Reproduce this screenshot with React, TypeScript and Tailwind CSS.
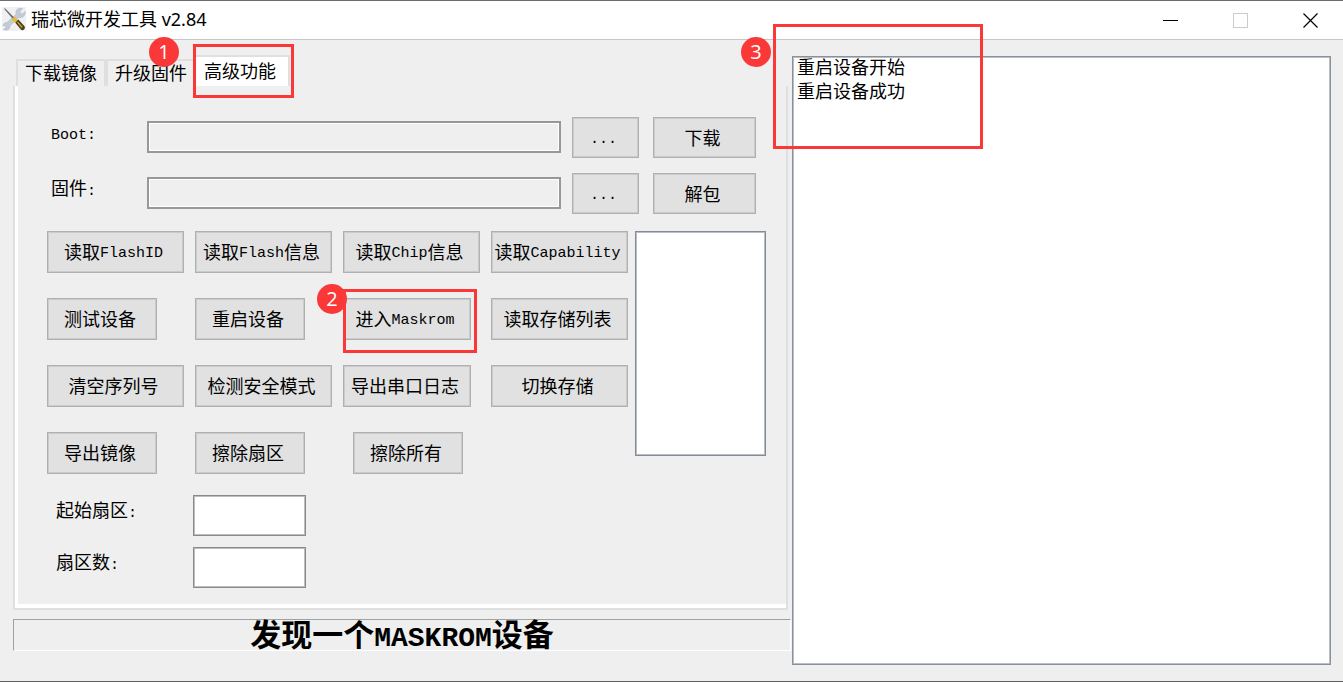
import { Fragment, type ReactNode } from "react";
import clsx from "clsx";

const TABS = ["下载镜像", "升级固件", "高级功能"];

const LOGS = ["重启设备开始", "重启设备成功"];

type Action = { label: string; width: string; mark?: boolean };

const ACTIONS: Action[] = [
  { label: "读取FlashID", width: "w-[137px]" },
  { label: "读取Flash信息", width: "w-[137px]" },
  { label: "读取Chip信息", width: "w-[137px]" },
  { label: "读取Capability", width: "w-[137px]" },
  { label: "测试设备", width: "w-[110px]" },
  { label: "重启设备", width: "w-[110px]" },
  { label: "进入Maskrom", width: "w-[128px]", mark: true },
  { label: "读取存储列表", width: "w-[137px]" },
  { label: "清空序列号", width: "w-[137px]" },
  { label: "检测安全模式", width: "w-[137px]" },
  { label: "导出串口日志", width: "w-[128px]" },
  { label: "切换存储", width: "w-[137px]" },
  { label: "导出镜像", width: "w-[110px]" },
  { label: "擦除扇区", width: "w-[110px]" },
  { label: "擦除所有", width: "w-[110px] ml-[10px]" },
];

// Latin runs are set smaller so that one letter is half a Chinese character wide
function Mixed({ text, latin = "text-[15px]" }: { text: string; latin?: string }) {
  return (
    <>
      {text.split(/([\x21-\x7e]+)/).map((part, i) =>
        i % 2 ? (
          <span key={i} className={latin}>
            {part}
          </span>
        ) : (
          <Fragment key={i}>{part}</Fragment>
        )
      )}
    </>
  );
}

function Button({ className, children }: { className?: string; children: ReactNode }) {
  return (
    <button
      type="button"
      className={clsx(
        "flex items-center justify-center whitespace-nowrap border border-[#b0b0b0] bg-[#e1e1e1] pt-1 pr-1 inset-ring-1 inset-ring-[#cbcbcb] hover:bg-[#e5f1fb]",
        className
      )}
    >
      {children}
    </button>
  );
}

// Red frame with a numbered badge, drawn over the interface
function Mark({ step, frame, badge }: { step: number; frame: string; badge: string }) {
  return (
    <>
      <span className={clsx("pointer-events-none absolute z-10 border-3 border-[#fb3838]", frame)} />
      <span
        className={clsx(
          "pointer-events-none absolute z-20 flex size-[30px] items-center justify-center rounded-full bg-[#fb3838] font-['Open_Sans',sans-serif] text-xl leading-none text-white",
          badge
        )}
      >
        {step}
      </span>
    </>
  );
}

function ToolIcon() {
  return (
    <svg viewBox="0 0 24 24" className="size-6" aria-hidden="true">
      <rect width="24" height="24" fill="#eef0f3" />
      <path
        d="M15 2.5c2-1.500 4-1.500 5.500-.8l-2.600 2.800.6 2 2 .5L23 4.500c.6 2.500-.6 5-3.200 5.800-1 .3-1.800.2-2.600 0L8 18.800c.2 2-.8 3.700-3 4.200-1.200.2-2.500 0-3.400-.6L4 20.500l-.5-1.700-1.800-.4L1 19c.2-2 1.700-3.500 4-3.400L14.200 7.200c-.5-1.700-.2-3.500.8-4.700z"
        fill="#c3ccd6"
        stroke="#a9b5c1"
        strokeWidth=".6"
      />
      <path d="M1.800 1.600l1.500-.1L12 10.600l-1.300 1.200z" fill="#6d6a5c" />
      <path d="M10 12.300l2.600-2.500 3.400 3.500-2.600 2.600z" fill="#f0b72c" />
      <path d="M13.300 15.800l3-3.200 6 6.400c1 1.300.6 2.600-.3 3.500-1 .9-2.300.9-3.300-.2z" fill="#4b3d1d" />
      <path d="M15.500 15l4.700 5.500" stroke="#e0a524" strokeWidth="1.200" />
    </svg>
  );
}

function TitleBar() {
  return (
    <header className="flex h-10 items-stretch border-t border-b border-t-[#6e6c6e] border-b-[#c6c6c6] bg-white">
      <div className="flex flex-1 items-center gap-[5px] pb-0.5 pl-0.5">
        <ToolIcon />
        <h1 className="font-['Noto_Sans','Noto_Sans_CJK_SC',sans-serif] text-lg leading-6">
          瑞芯微开发工具 v2.84
        </h1>
      </div>
      <div className="flex">
        <button type="button" aria-label="最小化" className="flex w-[70px] items-center justify-center pl-1">
          <svg width="15" height="15" shapeRendering="crispEdges">
            <path d="M0 7.500h15" stroke="#000" />
          </svg>
        </button>
        <button type="button" aria-label="最大化" disabled className="flex w-[70px] items-center justify-center pl-1">
          <svg width="15" height="15" shapeRendering="crispEdges">
            <path d="M.5.5h14v14H.5z" fill="none" stroke="#ccc" />
          </svg>
        </button>
        <button type="button" aria-label="关闭" className="flex w-[70px] items-center justify-center pl-1">
          <svg width="15" height="15">
            <path d="M.5.5l14 14M14.500.5l-14 14" stroke="#000" strokeWidth="1.200" />
          </svg>
        </button>
      </div>
    </header>
  );
}

function FileRow({ id, label, action }: { id: string; label: string; action: string }) {
  return (
    <div className="flex h-[41px] items-center">
      <label htmlFor={id} className="w-24 pb-1.5">
        <Mixed text={label} />
      </label>
      <input
        id={id}
        readOnly
        className="mb-0.5 h-8 w-[414px] border-2 border-[#989898] bg-[#efefef] px-1 inset-ring-1 inset-ring-white"
      />
      <Button className="ml-[11px] h-full w-[67px]">
        <Mixed text="..." />
      </Button>
      <Button className="ml-[14px] h-full w-[103px]">{action}</Button>
    </div>
  );
}

function SectorRow({ id, label }: { id: string; label: string }) {
  return (
    <div className="flex h-[41px] items-center">
      <label htmlFor={id} className="w-[137px] pb-1.5">
        <Mixed text={label} />
      </label>
      <input
        id={id}
        className="h-full w-[113px] border border-[#8a8a8a] bg-white px-1 inset-ring-1 inset-ring-[#bdbdbd]"
      />
    </div>
  );
}

export default function App() {
  return (
    <div className="flex min-h-screen flex-col border-b border-[#5f5f5f] bg-[#efefef] font-['Liberation_Mono','Noto_Sans_CJK_SC',monospace] text-lg leading-6 text-black">
      <TitleBar />
      <main className="flex flex-1 gap-px pt-4 pr-3 pb-4 pl-[13px]">
        <section className="flex w-[778px] shrink-0 flex-col">
          <div role="tablist" className="flex h-[30px] items-end pl-[3px]">
            {TABS.map((tab) => {
              const active = tab === "高级功能";
              return (
                <div key={tab} className={clsx("relative", active ? "h-[31px]" : "h-[27px]")}>
                  <button
                    type="button"
                    role="tab"
                    aria-selected={active}
                    className={clsx(
                      "flex h-full items-center justify-center whitespace-nowrap border-t-2 border-r-2 border-[#dfdfdf] pt-0.5",
                      active ? "w-[94px] bg-white pr-1" : "w-[90px] first:border-l-2"
                    )}
                  >
                    {tab}
                  </button>
                  {active && (
                    <Mark step={1} frame="-top-[11px] -left-[3px] h-[54px] w-[101px]" badge="-top-[18px] -left-[47px]" />
                  )}
                </div>
              );
            })}
          </div>

          <div role="tabpanel" className="mr-[3px] border-r-2 border-b-2 border-l-2 border-[#dfdfdf]">
            <div className="border-b-4 border-l-3 border-white pt-[31px] pb-4 pl-[29px]">
              <div className="flex flex-col gap-[15px] pl-1">
                <FileRow id="boot" label="Boot:" action="下载" />
                <FileRow id="firmware" label="固件:" action="解包" />
              </div>

              <div className="mt-[17px] flex items-start gap-[7px]">
                <div className="grid grid-cols-[repeat(4,137px)] gap-x-[11px] gap-y-[25px]">
                  {ACTIONS.map(({ label, width, mark }) => (
                    <div key={label} className="relative">
                      <Button className={clsx("h-[42px]", width)}>
                        <Mixed text={label} />
                      </Button>
                      {mark && <Mark step={2} frame="-top-[9px] left-0 h-16 w-[134px]" badge="-top-[14px] -left-[26px]" />}
                    </div>
                  ))}
                </div>
                <ul
                  aria-label="存储列表"
                  className="h-[225px] w-[131px] border border-[#858b95] bg-white inset-ring-1 inset-ring-[#b9bdc4]"
                />
              </div>

              <div className="mt-[21px] flex flex-col gap-[11px] pl-[9px]">
                <SectorRow id="start-sector" label="起始扇区:" />
                <SectorRow id="sector-count" label="扇区数:" />
              </div>
            </div>
          </div>

          <p
            role="status"
            className="mt-[9px] flex h-8 items-center justify-center border border-t-[#a0a0a0] border-r-white border-b-white border-l-[#a0a0a0] pt-1 text-[31px] leading-none font-bold"
          >
            <span>
              <Mixed text="发现一个MASKROM设备" latin="text-[28px]" />
            </span>
          </p>
        </section>

        <section className="relative flex flex-1">
          <ul
            aria-label="日志"
            className="flex-1 border border-[#8b919b] bg-white pl-1 inset-ring-1 inset-ring-[#b9bdc4]"
          >
            {LOGS.map((line) => (
              <li key={line}>{line}</li>
            ))}
          </ul>
          <Mark step={3} frame="-top-8 -left-[19px] h-[125px] w-[210px]" badge="-top-[19px] -left-[51px]" />
        </section>
      </main>
    </div>
  );
}
